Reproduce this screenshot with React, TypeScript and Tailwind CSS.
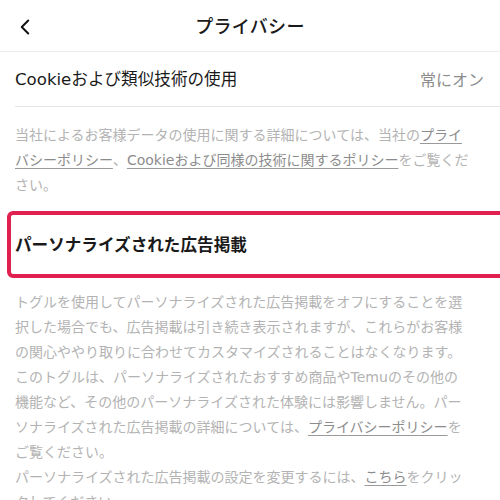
import { ChevronLeft } from 'lucide-react';

const font = { fontFamily: '"DejaVu Sans", "Noto Sans CJK JP", sans-serif' };

function PolicyLink({ children }: { children: React.ReactNode }) {
  return <a className="text-[#8c8c8c] underline decoration-[#9a9a9a] underline-offset-[3px]">{children}</a>;
}

export default function App() {
  return (
    <div className="w-[500px] h-[500px] overflow-hidden bg-white text-[#1a1a1a] [text-spacing-trim:space-all]" style={font}>
      <header className="relative flex h-[52px] items-center justify-center border-b border-[#ececec]">
        <button className="absolute left-[12px] top-[14px] text-[#111]">
          <ChevronLeft size={26} strokeWidth={1.8} />
        </button>
        <h1 className="pt-[2px] text-[18px] font-medium tracking-[0.3px]">プライバシー</h1>
      </header>

      <div className="ml-[15px] flex h-[55px] items-center justify-between border-b border-[#e6e6e6] pr-[16px] pt-[3px]">
        <span className="text-[16.6px]">Cookieおよび類似技術の使用</span>
        <span className="text-[16px] text-[#8c8c8c]">常にオン</span>
      </div>

      <p className="pl-[15px] pr-[2px] pt-[16px] text-[14px] leading-[25px] text-[#b3b3b3]">
        当社によるお客様データの使用に関する詳細については、当社の<PolicyLink>プライ<br />バシーポリシー</PolicyLink>、
        <PolicyLink>Cookieおよび同様の技術に関するポリシー</PolicyLink>をご覧くだ<br />さい。
      </p>

      <div className="ml-[7px] -mr-[20px] mt-[13px] flex h-[67px] items-center rounded-[6px] border-4 border-[#e0214f] pl-[4px] pt-[3px]">
        <h2 className="text-[16.6px] font-semibold">パーソナライズされた広告掲載</h2>
      </div>

      <div className="pl-[15px] pr-[2px] pt-[12px] text-[14px] leading-[25px] text-[#b3b3b3]">
        <p>
          トグルを使用してパーソナライズされた広告掲載をオフにすることを選<br />
          択した場合でも、広告掲載は引き続き表示されますが、これらがお客様<br />
          の関心ややり取りに合わせてカスタマイズされることはなくなります。<br />
          このトグルは、パーソナライズされたおすすめ商品やTemuのその他の<br />
          機能など、その他のパーソナライズされた体験には影響しません。パー<br />
          ソナライズされた広告掲載の詳細については、<PolicyLink>プライバシーポリシー</PolicyLink>を<br />
          ご覧ください。
        </p>
        <p>
          パーソナライズされた広告掲載の設定を変更するには、<PolicyLink>こちら</PolicyLink>をクリッ<br />
          クしてください。
        </p>
      </div>
    </div>
  );
}
